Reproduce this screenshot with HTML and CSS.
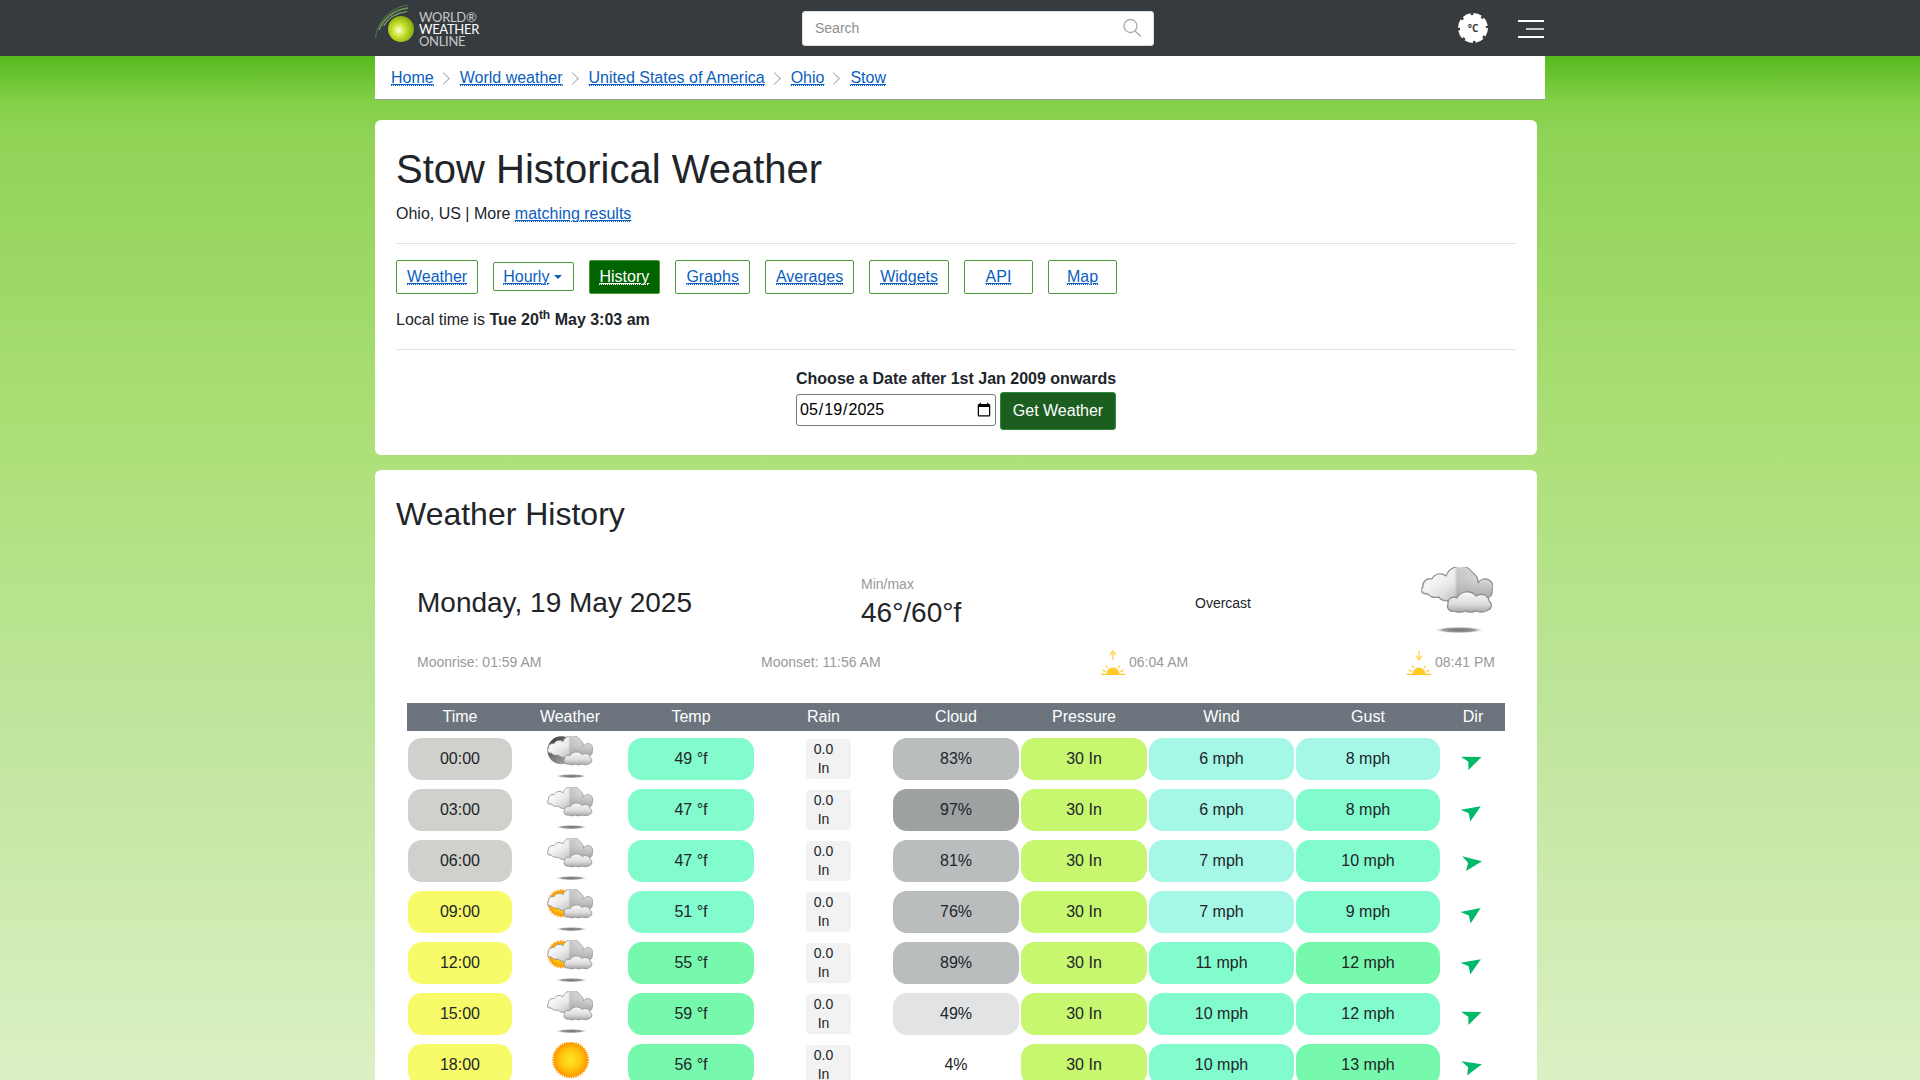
FILE: index.html
```html
<!DOCTYPE html>
<html lang="en">
<head>
<meta charset="utf-8">
<title>Stow Historical Weather</title>
<link rel="stylesheet" href="styles.css">
</head>
<body>
<svg class="defs" width="0" height="0" aria-hidden="true">
  <defs>
    <linearGradient id="cloudBack" x1="0" x2="0.35" y1="0" y2="1">
      <stop offset="0" stop-color="#f4f4f4"/><stop offset="0.55" stop-color="#e2e2e2"/><stop offset="1" stop-color="#b4b4b4"/>
    </linearGradient>
    <linearGradient id="cloudColumn" x1="0" x2="1" y1="0" y2="0">
      <stop offset="0" stop-color="#fff" stop-opacity="0.75"/><stop offset="0.45" stop-color="#fff" stop-opacity="0.2"/><stop offset="0.5" stop-color="#999" stop-opacity="0.45"/><stop offset="1" stop-color="#999" stop-opacity="0"/>
    </linearGradient>
    <linearGradient id="cloudFront" x1="0" x2="0" y1="0" y2="1">
      <stop offset="0" stop-color="#fafafa"/><stop offset="0.6" stop-color="#dcdcdc"/><stop offset="1" stop-color="#a8a8a8"/>
    </linearGradient>
    <radialGradient id="shadowFill">
      <stop offset="0" stop-color="#6f6f6f"/><stop offset="0.6" stop-color="#999"/><stop offset="1" stop-color="#fff" stop-opacity="0"/>
    </radialGradient>
    <radialGradient id="sunFill">
      <stop offset="0" stop-color="#ffe922"/><stop offset="0.6" stop-color="#ffc40f"/><stop offset="1" stop-color="#ff9800"/>
    </radialGradient>
    <linearGradient id="moonFill" x1="0" x2="1" y1="0" y2="1">
      <stop offset="0" stop-color="#2e2e2e"/><stop offset="1" stop-color="#c4c4c4"/>
    </linearGradient>
    <radialGradient id="globeFill" cx="0.42" cy="0.55" r="0.6">
      <stop offset="0" stop-color="#fbffd8"/><stop offset="0.45" stop-color="#c6e02a"/><stop offset="1" stop-color="#7fa512"/>
    </radialGradient>
    <g id="cloudShape">
      <path d="M2 20A7 7 0 0 1 11 12A9 9 0 0 1 25 9A15 14 0 0 1 52 6A11 11 0 0 1 57 16A8 8 0 0 1 71 24A6 6 0 0 1 64 31L32 32A8 5 0 0 1 18 30A8 5 0 0 1 7 27A6 4 0 0 1 2 20Z" fill="url(#cloudBack)" stroke="#8c8c8c" stroke-width="1.200" stroke-linejoin="round"/>
      <path d="M3 20A7 7 0 0 1 11 13A9 9 0 0 1 25 10A15 14 0 0 1 52 7A11 11 0 0 1 57 17A8 8 0 0 1 70 24A6 6 0 0 1 64 30L32 31A8 5 0 0 1 18 29A8 5 0 0 1 7 26A6 4 0 0 1 3 20Z" fill="url(#cloudColumn)"/>
      <path d="M27 37A6 6 0 0 1 36 31A11 10 0 0 1 55 29A8 7 0 0 1 68 34A5 5 0 0 1 67 43A7 3 0 0 1 55 44A7 3 0 0 1 44 44A7 3 0 0 1 33 44A5 5 0 0 1 27 37Z" fill="url(#cloudFront)" stroke="#8c8c8c" stroke-width="1.200" stroke-linejoin="round"/>
    </g>
    <ellipse id="cloudShadow" cx="38" cy="63" rx="26" ry="3.500" fill="url(#shadowFill)"/>
    <symbol id="iconCloud" viewBox="0 0 72 66">
      <use href="#cloudShape"/><use href="#cloudShadow"/>
    </symbol>
    <symbol id="iconMoon" viewBox="0 0 72 66">
      <circle cx="22.500" cy="22.500" r="22" fill="url(#moonFill)"/>
      <use href="#cloudShape"/><use href="#cloudShadow"/>
    </symbol>
    <symbol id="iconSunCloud" viewBox="0 0 72 66">
      <circle cx="22.500" cy="22.500" r="20" fill="url(#sunFill)"/>
      <circle cx="22.500" cy="22.500" r="20.500" fill="none" stroke="#ff9800" stroke-width="3" stroke-dasharray="2 1.600"/>
      <use href="#cloudShape"/><use href="#cloudShadow"/>
    </symbol>
    <symbol id="iconSun" viewBox="0 0 72 66">
      <circle cx="37" cy="28" r="27" fill="url(#sunFill)"/>
      <circle cx="37" cy="28" r="27.500" fill="none" stroke="#ff9800" stroke-width="3" stroke-dasharray="2 1.700"/>
      <ellipse cx="38" cy="63" rx="20" ry="2" fill="url(#shadowFill)" opacity="0.5"/>
    </symbol>
    <symbol id="iconArrow" viewBox="0 0 24 24">
      <path d="M22 12 2.500 5.500 8 12.500 5.500 20.500Z" fill="#00b96b"/>
    </symbol>
    <g id="sunBase">
      <path d="M5.500 24A6.500 6.500 0 0 1 18.500 24Z" fill="#ffca28"/>
      <path d="M0 24.300H24" stroke="#ffca28" stroke-width="1.400"/>
      <path d="M1.500 20 4.500 21.600M5 15.500 7 18M19 15.500 17 18M22.500 20 19.500 21.600" stroke="#ffc928" stroke-width="1.200"/>
    </g>
  </defs>
</svg>

<header class="topbar">
  <div class="topbar-inner">
    <a class="logo" href="#">
      <svg class="logo-mark" viewBox="0 0 44 48" width="44" height="48" aria-hidden="true">
        <path d="M0.500 34C2 18 14 4 33 1" fill="none" stroke="#4f7a44" stroke-width="1"/>
        <path d="M4 26C8 15 18 6 33 4" fill="none" stroke="#6e9a58" stroke-width="1.600"/>
        <path d="M8.500 22C13 14 21 9 32 7.500" fill="none" stroke="#8ab26c" stroke-width="1.100"/>
        <circle cx="26" cy="25" r="13" fill="url(#globeFill)"/>
      </svg>
      <span class="logo-text"><span>WORLD®</span><strong>WEATHER</strong><span>ONLINE</span></span>
    </a>
    <form class="search">
      <input class="search-input" type="text" placeholder="Search">
      <svg class="search-icon" viewBox="0 0 20 20" width="20" height="20" aria-hidden="true">
        <circle cx="8.500" cy="8" r="6.500" fill="none" stroke="#aaa" stroke-width="1.300"/>
        <path d="M13 13 19 18.500" stroke="#aaa" stroke-width="1.300"/>
      </svg>
    </form>
    <svg class="unit-gear" viewBox="0 0 32 32" width="32" height="32" aria-hidden="true">
      <circle cx="16" cy="16" r="13" fill="#fff"/>
      <circle cx="16" cy="16" r="13.500" fill="none" stroke="#fff" stroke-width="3" stroke-dasharray="8 2.600"/>
      <text x="16" y="20" text-anchor="middle" class="gear-text">°C</text>
    </svg>
    <button class="burger" type="button" aria-label="Menu"><span></span><span class="short"></span><span></span></button>
  </div>
</header>

<nav class="crumbs">
  <a href="#"><span class="lk">Home</span></a><i class="chev"></i>
  <a href="#"><span class="lk">World weather</span></a><i class="chev"></i>
  <a href="#"><span class="lk">United States of America</span></a><i class="chev"></i>
  <a href="#"><span class="lk">Ohio</span></a><i class="chev"></i>
  <a href="#"><span class="lk">Stow</span></a>
</nav>

<main class="page">
  <section class="card card-top">
    <h1>Stow Historical Weather</h1>
    <p class="sub">Ohio, US | More <a href="#"><span class="lk">matching results</span></a></p>
    <hr>
    <div class="tabs">
      <a class="tab" href="#"><span class="lk">Weather</span></a>
      <a class="tab tab-drop" href="#"><span class="lk">Hourly</span><b class="caret"></b></a>
      <a class="tab tab-on" href="#"><span class="lk">History</span></a>
      <a class="tab" href="#"><span class="lk">Graphs</span></a>
      <a class="tab" href="#"><span class="lk">Averages</span></a>
      <a class="tab" href="#"><span class="lk">Widgets</span></a>
      <a class="tab tab-api" href="#"><span class="lk">API</span></a>
      <a class="tab tab-map" href="#"><span class="lk">Map</span></a>
    </div>
    <p class="local">Local time is <b>Tue 20<sup>th</sup> May 3:03 am</b></p>
    <hr class="hr2">
    <form class="date-form">
      <label class="date-label" for="d">Choose a Date after 1st Jan 2009 onwards</label>
      <div class="date-row">
        <input id="d" class="date-input" type="date" value="2025-05-19">
        <button class="date-btn" type="button">Get Weather</button>
      </div>
    </form>
  </section>

  <section class="card card-hist">
    <h2>Weather History</h2>
    <div class="summary">
      <div class="s-date">Monday, 19 May 2025</div>
      <div class="s-minmax"><small>Min/max</small><span>46°/60°f</span></div>
      <div class="s-cond">Overcast</div>
      <svg class="s-icon"><use href="#iconCloud"/></svg>
    </div>
    <div class="astro">
      <span>Moonrise: 01:59 AM</span>
      <span>Moonset: 11:56 AM</span>
      <span class="sun"><svg viewBox="0 0 24 25" width="24" height="25"><use href="#sunBase"/><path d="M12 10V2M9 5 12 1 15 5" fill="none" stroke="#ffd966" stroke-width="1.500"/></svg>06:04 AM</span>
      <span class="sun"><svg viewBox="0 0 24 25" width="24" height="25"><use href="#sunBase"/><path d="M12 1V9M9 6 12 10 15 6" fill="none" stroke="#ffd966" stroke-width="1.500"/></svg>08:41 PM</span>
    </div>

    <div class="hourly">
      <div class="row head"><span>Time</span><span>Weather</span><span>Temp</span><span>Rain</span><span>Cloud</span><span>Pressure</span><span>Wind</span><span>Gust</span><span>Dir</span></div>

      <div class="row">
        <span class="pill t-night">00:00</span>
        <svg class="w-icon"><use href="#iconMoon"/></svg>
        <span class="pill c-a">49 °f</span>
        <span class="rain">0.0<br>In</span>
        <span class="pill cl-b">83%</span>
        <span class="pill c-p">30 In</span>
        <span class="pill c-w">6 mph</span>
        <span class="pill c-w">8 mph</span>
        <svg class="dir" style="transform:rotate(-18deg)"><use href="#iconArrow"/></svg>
      </div>
      <div class="row">
        <span class="pill t-night">03:00</span>
        <svg class="w-icon"><use href="#iconCloud"/></svg>
        <span class="pill c-a">47 °f</span>
        <span class="rain">0.0<br>In</span>
        <span class="pill cl-a">97%</span>
        <span class="pill c-p">30 In</span>
        <span class="pill c-w">6 mph</span>
        <span class="pill c-a">8 mph</span>
        <svg class="dir" style="transform:rotate(-28deg)"><use href="#iconArrow"/></svg>
      </div>
      <div class="row">
        <span class="pill t-night">06:00</span>
        <svg class="w-icon"><use href="#iconCloud"/></svg>
        <span class="pill c-a">47 °f</span>
        <span class="rain">0.0<br>In</span>
        <span class="pill cl-b">81%</span>
        <span class="pill c-p">30 In</span>
        <span class="pill c-w">7 mph</span>
        <span class="pill c-a">10 mph</span>
        <svg class="dir" style="transform:rotate(-4deg)"><use href="#iconArrow"/></svg>
      </div>
      <div class="row">
        <span class="pill t-day">09:00</span>
        <svg class="w-icon"><use href="#iconSunCloud"/></svg>
        <span class="pill c-a">51 °f</span>
        <span class="rain">0.0<br>In</span>
        <span class="pill cl-b">76%</span>
        <span class="pill c-p">30 In</span>
        <span class="pill c-w">7 mph</span>
        <span class="pill c-a">9 mph</span>
        <svg class="dir" style="transform:rotate(-30deg)"><use href="#iconArrow"/></svg>
      </div>
      <div class="row">
        <span class="pill t-day">12:00</span>
        <svg class="w-icon"><use href="#iconSunCloud"/></svg>
        <span class="pill c-g">55 °f</span>
        <span class="rain">0.0<br>In</span>
        <span class="pill cl-b">89%</span>
        <span class="pill c-p">30 In</span>
        <span class="pill c-a">11 mph</span>
        <span class="pill c-g">12 mph</span>
        <svg class="dir" style="transform:rotate(-28deg)"><use href="#iconArrow"/></svg>
      </div>
      <div class="row">
        <span class="pill t-day">15:00</span>
        <svg class="w-icon"><use href="#iconCloud"/></svg>
        <span class="pill c-g">59 °f</span>
        <span class="rain">0.0<br>In</span>
        <span class="pill cl-c">49%</span>
        <span class="pill c-p">30 In</span>
        <span class="pill c-a">10 mph</span>
        <span class="pill c-a">12 mph</span>
        <svg class="dir" style="transform:rotate(-18deg)"><use href="#iconArrow"/></svg>
      </div>
      <div class="row">
        <span class="pill t-day">18:00</span>
        <svg class="w-icon"><use href="#iconSun"/></svg>
        <span class="pill c-g">56 °f</span>
        <span class="rain">0.0<br>In</span>
        <span class="pill cl-d">4%</span>
        <span class="pill c-p">30 In</span>
        <span class="pill c-a">10 mph</span>
        <span class="pill c-g">13 mph</span>
        <svg class="dir" style="transform:rotate(-10deg)"><use href="#iconArrow"/></svg>
      </div>
    </div>
  </section>
</main>
</body>
</html>
```
FILE: styles.css
```css
* { box-sizing: border-box; }
html, body { margin: 0; height: 100vh; overflow: hidden; }
body {
  font-family: "Liberation Sans", Arial, sans-serif;
  font-size: 16px;
  line-height: 1.5;
  color: #212529;
  background: linear-gradient(180deg, #4cb419 0, #57b91f 56px, #82cf46 100px, #8fd356 130px, #aee07a 460px, #bde59a 700px, #dcf0c4 1080px);
}
.defs { display: block; height: 0; }
a { color: #0b5ec0; text-decoration: none; }
.lk { text-decoration: underline; background: linear-gradient(90deg, currentColor 50%, transparent 50%) left bottom / 2px 1px repeat-x; }

/* top bar */
.topbar { height: 56px; background: #363b40; }
.topbar-inner { width: 1170px; height: 56px; margin: 0 auto; display: flex; align-items: center; }
.logo { display: flex; width: 105px; height: 48px; }
.logo-mark { flex: none; }
.logo-text { display: flex; flex-direction: column; font-family: Lato, "Liberation Sans", sans-serif; font-size: 13px; line-height: 12px; color: #c6c8c9; padding-top: 7px; letter-spacing: -0.3px; white-space: nowrap; }
.logo-text strong { color: #fff; font-weight: 400; }
.search { position: relative; width: 352px; height: 35px; margin-left: 322px; }
.search-input { width: 100%; height: 100%; border: 1px solid #ddd; border-radius: 3px; padding: 0 12px; font: 14px "Liberation Sans", Arial, sans-serif; background: #fff; }
.search-input::placeholder { color: #8e8e8e; opacity: 1; }
.search-icon { position: absolute; right: 12px; top: 7px; }
.unit-gear { margin-left: auto; }
.gear-text { font: bold 10px "Open Sans", "Liberation Sans", sans-serif; fill: #363b40; }
.burger { display: flex; flex-direction: column; justify-content: space-between; align-items: flex-end; width: 26px; height: 18px; margin: 2px 1px 0 29px; padding: 0; border: 0; background: none; }
.burger span { display: block; width: 26px; height: 2px; background: #fff; }
.burger .short { width: 18px; background: #ccc; }

/* breadcrumb */
.crumbs { width: 1170px; height: 44px; margin: 0 auto; padding: 1px 0 0 16px; background: #fff; border-bottom: 1px solid #999; display: flex; align-items: center; }
.chev { width: 9px; height: 9px; margin: 0 12px 0 5px; border-top: 1px solid #aaa; border-right: 1px solid #aaa; transform: rotate(45deg); }

/* cards */
.page { width: 1170px; margin: 20px auto 0; }
.card { width: 1162px; padding: 25px 21px; background: #fff; border-radius: 6px; }
.card + .card { margin-top: 15px; }
h1 { margin: 0; font-size: 40px; font-weight: 400; line-height: 48px; }
h2 { margin: 0; font-size: 32px; font-weight: 400; line-height: 38px; }
.sub { margin: 9px 0 0; }
hr { margin: 17px 0 0; border: 0; border-top: 1px solid #e3e3e3; }
.tabs { display: flex; align-items: center; gap: 15px; margin-top: 16px; }
.tab { display: block; height: 34px; line-height: 32px; padding: 0 10px; border: 1px solid #4a9a3a; border-radius: 2px; }
.tab-drop { height: 29px; line-height: 27px; margin-bottom: 1px; padding: 0 11px 0 9px; }
.tab-on { width: 71px; padding-left: 9px; background: #006400; color: #fff; }
.tab-api { width: 69px; text-align: center; }
.tab-map { width: 69px; text-align: center; }
.caret { display: inline-block; margin-left: 5px; vertical-align: 3px; border-top: 4px solid #0b5ec0; border-left: 4px solid transparent; border-right: 4px solid transparent; }
.local { margin: 14px 0 0; }
.local sup { font-size: 12px; line-height: 0; }
.hr2 { margin-top: 17px; }
.date-form { width: 320px; margin: 17px auto 0; }
.date-label { display: block; font-weight: 700; line-height: 24px; white-space: nowrap; }
.date-row { display: flex; align-items: center; gap: 4px; margin-top: 1px; }
.date-input { width: 200px; height: 32px; margin-top: -2px; padding: 1px 1px 1px 2px; border: 1px solid #767676; border-radius: 3px; font: 16px "Liberation Sans", Arial, sans-serif; color: #000; background: #fff; }
.date-btn { width: 116px; height: 38px; padding: 0; border: 1px solid #2e8b3a; border-radius: 3px; background: #1b5e20; color: #fff; font: 16px "Liberation Sans", Arial, sans-serif; }

/* summary */
.summary { display: grid; grid-template-columns: 444px 334px 226px 72px; align-items: center; margin: 33px 0 0 21px; height: 72px; }
.s-date { margin-top: 2px; font-size: 28px; line-height: 36px; }
.s-minmax { display: flex; flex-direction: column; }
.s-minmax small { font-size: 14px; line-height: 21px; color: #999; }
.s-minmax span { font-size: 28px; line-height: 36px; }
.s-cond { margin-top: 2px; font-size: 14px; }
.s-icon { width: 72px; height: 66px; margin-bottom: 4px; }
.astro { display: grid; grid-template-columns: 344px 340px 306px auto; align-items: center; margin: 12px 0 0 21px; height: 25px; font-size: 14px; color: #999; }
.sun { display: flex; align-items: center; gap: 4px; line-height: 21px; }
.sun svg { flex: none; }

/* hourly */
.hourly { margin: 28px 0 0 11px; width: 1098px; }
.row { display: grid; grid-template-columns: 106px 114px 128px 137px 128px 128px 147px 146px 64px; align-items: center; height: 42px; margin-top: 9px; text-align: center; }
.row.head { height: 28px; margin-top: 0; margin-bottom: -2px; background: #6c757d; color: #fff; line-height: 28px; }
.pill { display: block; height: 42px; margin: 0 1px; line-height: 41px; border-radius: 14px; }
.t-night { background: #d0d0cc; }
.t-day { background: #f7fb6a; }
.c-a { background: #82fbcd; }
.c-g { background: #76f9ac; }
.c-w { background: #a5f7e6; }
.c-p { background: #c6f76f; }
.cl-a { background: #9da1a2; }
.cl-b { background: #b9bdbe; }
.cl-c { background: #e2e3e5; }
.cl-d { background: #fff; }
.rain { display: block; width: 45px; height: 40px; margin-left: 51px; padding: 1px 10px 0 0; background: #f2f2f2; border-radius: 4px; font-size: 14px; line-height: 19px; text-align: center; }
.w-icon { width: 46px; height: 42px; margin: -4px 0 0 34px; }
.dir { width: 24px; height: 24px; margin: 2px 0 0 19px; }
```
